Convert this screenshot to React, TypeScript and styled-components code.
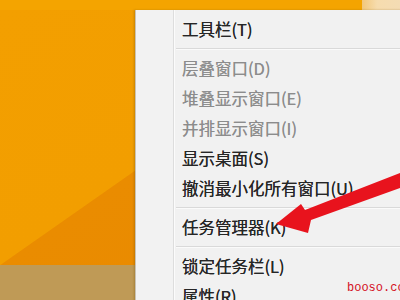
import React from "react";
import styled, { createGlobalStyle } from "styled-components";

const GlobalStyle = createGlobalStyle`
  html, body { margin: 0; padding: 0; }
  body {
    width: 400px;
    height: 300px;
    overflow: hidden;
    font-family: "Noto Sans CJK SC", "Noto Sans", sans-serif;
  }
`;

type Item = { label: string; disabled?: boolean } | "sep";

const items: Item[] = [
    { label: "工具栏(T)" },
    "sep",
    { label: "层叠窗口(D)", disabled: true },
    { label: "堆叠显示窗口(E)", disabled: true },
    { label: "并排显示窗口(I)", disabled: true },
    { label: "显示桌面(S)" },
    { label: "撤消最小化所有窗口(U)" },
    "sep",
    { label: "任务管理器(K)" },
    "sep",
    { label: "锁定任务栏(L)" },
    { label: "属性(R)" },
];

export default function App() {
    return (
        <Screen>
            <GlobalStyle />
            <TopStrip>
                <OtherWindow />
            </TopStrip>
            <Desktop />
            <Taskbar />

            <Menu>
                <Gutter />
                <List>
                    {items.map((e, index) =>
                        e === "sep"
                            ? <Separator key={index} />
                            : <Row key={index} $disabled={e.disabled}>{e.label}</Row>
                    )}
                </List>
            </Menu>

            <Arrow viewBox="0 0 130 80" width="130" height="80">
                <polygon
                    points="6,64 31,44 35,50 130,13 130,28 41,60 38,73"
                    fill="#e8131d"
                />
            </Arrow>

            <Watermark>booso.com</Watermark>
        </Screen>
    );
}

const Screen = styled.div`
position: relative;
width: 400px;
height: 300px;
overflow: hidden;
display: flex;
flex-direction: column;
background: #f3a300;
`

const TopStrip = styled.div`
height: 10px;
display: flex;
justify-content: flex-end;
background: #f4a400;
`

const OtherWindow = styled.div`
width: 38px;
height: 10px;
background: linear-gradient(90deg, #f2c77a, #f6dcae 40%, #f4dcb4);
`

const Desktop = styled.div`
flex: 1;
background: linear-gradient(145deg, #f39f00 0%, #f29e00 47.6%, #ea8c00 47.8%, #e98900 100%);
`

const Taskbar = styled.div`
height: 35px;
background: #bf9a56;
`

const Menu = styled.div`
position: absolute;
left: 135px;
top: 10px;
right: -10px;
bottom: -30px;
display: flex;
background: #f1f1f1;
border-left: 1px solid #c9c2b4;
box-shadow: -1px 0 2px rgba(120, 80, 0, 0.35);
`

const Gutter = styled.div`
width: 37px;
background: #f2f2f2;
border-right: 1px solid #dddddd;
box-shadow: 1px 0 0 #fbfbfb;
`

const List = styled.div`
flex: 1;
display: flex;
flex-direction: column;
padding-top: 4px;
`

const Row = styled.div<{ $disabled?: boolean }>`
height: 30px;
display: flex;
align-items: center;
padding-left: 8px;
font-size: 16.5px;
white-space: nowrap;
color: ${(p) => (p.$disabled ? "#8c8c8c" : "#262626")};
text-shadow: 0 0 0.6px ${(p) => (p.$disabled ? "#9a9a9a" : "#333")};
`

const Separator = styled.div`
height: 9px;
display: flex;
align-items: center;
&::after {
    content: "";
    flex: 1;
    height: 1px;
    margin-left: 2px;
    background: #d9d9d9;
    box-shadow: 0 1px 0 #fafafa;
}
`

const Arrow = styled.svg`
position: absolute;
left: 270px;
top: 160px;
`

const Watermark = styled.div`
position: absolute;
left: 347px;
top: 281px;
font-family: "Liberation Mono", monospace;
font-size: 12px;
color: #d4101e;
white-space: nowrap;
`
